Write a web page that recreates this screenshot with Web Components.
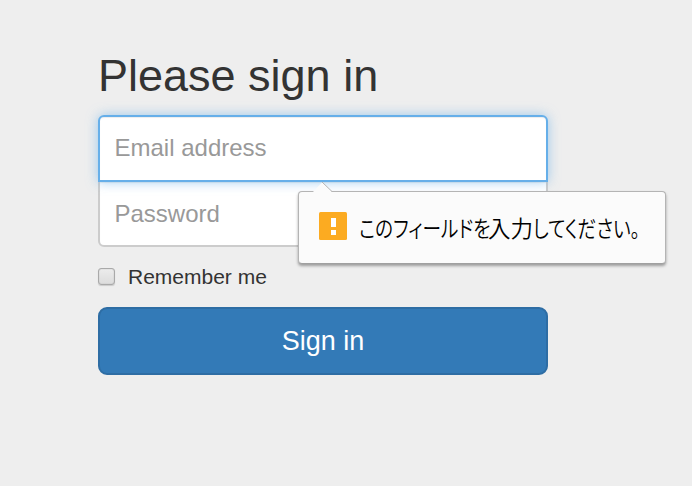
<!DOCTYPE html>
<html lang="ja">
<head>
<meta charset="utf-8">
<title>Sign in</title>
<style>
    body {
        margin: 0;
        background-color: #eee;
        color: #333;
        font-family: "Liberation Sans", Arial, sans-serif;
    }
</style>
</head>
<body>
<sign-in-form>
    <text-field slot="fields" type="email" placeholder="Email address" active>
        <validation-bubble><span>このフィールドを</span><b>入力</b><span>してください。</span></validation-bubble>
    </text-field>
    <text-field slot="fields" type="password" placeholder="Password"></text-field>
    <check-option slot="options">Remember me</check-option>
    <submit-button slot="actions">Sign in</submit-button>
</sign-in-form>

<script>
class SignInForm extends HTMLElement {
    connectedCallback() {
        this.attachShadow({ mode: 'open' });
        this.shadowRoot.innerHTML = `
            <style>
                :host {
                    display: block;
                    width: 450px;
                    padding: 51px 0 0 98px;
                }
                h2 {
                    margin: 0 0 14px;
                    font-size: 45px;
                    font-weight: 400;
                    line-height: 50px;
                }
                .fields {
                    display: flex;
                    flex-direction: column;
                }
                .options {
                    padding: 15px 0;
                }
            </style>
            <h2>Please sign in</h2>
            <div class="fields"><slot name="fields"></slot></div>
            <div class="options"><slot name="options"></slot></div>
            <slot name="actions"></slot>
        `;
    }
}
customElements.define('sign-in-form', SignInForm);

class TextField extends HTMLElement {
    connectedCallback() {
        this.attachShadow({ mode: 'open' });
        this.shadowRoot.innerHTML = `
            <style>
                :host {
                    display: block;
                    position: relative;
                }
                :host([active]) {
                    z-index: 1;
                    margin-bottom: -2px;
                }
                input {
                    display: block;
                    box-sizing: border-box;
                    width: 100%;
                    height: 67px;
                    margin: 0;
                    padding: 15px 14.5px;
                    border: 2px solid #ccc;
                    border-radius: 0 0 6px 6px;
                    background-color: #fff;
                    box-shadow: inset 0 1px 1px rgba(0, 0, 0, 0.075);
                    font-family: inherit;
                    font-size: 24px;
                    outline: 0;
                }
                :host([active]) input {
                    padding-bottom: 17px;
                    border-color: #66afe9;
                    border-radius: 6px 6px 0 0;
                    box-shadow: inset 0 1px 1px rgba(0, 0, 0, 0.075), 0 0 12px rgba(102, 175, 233, 0.6);
                }
                input::placeholder {
                    color: #999;
                    opacity: 1;
                }
            </style>
            <input>
            <slot></slot>
        `;
        const input = this.shadowRoot.querySelector('input');
        input.type = this.getAttribute('type');
        input.placeholder = this.getAttribute('placeholder');
    }
}
customElements.define('text-field', TextField);

class ValidationBubble extends HTMLElement {
    connectedCallback() {
        this.attachShadow({ mode: 'open' });
        this.shadowRoot.innerHTML = `
            <style>
                :host {
                    position: absolute;
                    top: 76px;
                    left: 200px;
                    display: flex;
                    align-items: center;
                    box-sizing: border-box;
                    width: 368px;
                    height: 73px;
                    padding: 0 0 4px 20px;
                    border: 1px solid #b4b4b4;
                    border-bottom-color: #a0a0a0;
                    border-radius: 4px;
                    background-color: #fbfbfb;
                    box-shadow: 0 2px 3px rgba(0, 0, 0, 0.35);
                    color: #000;
                    font-family: "Noto Sans CJK JP", sans-serif;
                    font-size: 23px;
                    font-weight: 350;
                    white-space: nowrap;
                }
                .arrow {
                    position: absolute;
                    top: -11px;
                    left: 12px;
                }
                .icon {
                    flex: none;
                    margin-right: 12px;
                }
                .message {
                    display: flex;
                    align-items: baseline;
                    padding-top: 2px;
                }
                /* kana run narrower than the kanji between them */
                ::slotted(span) {
                    width: 129px;
                    font-feature-settings: "palt";
                    transform: scaleX(0.81);
                    transform-origin: 0 50%;
                }
                ::slotted(b) {
                    width: 45px;
                    font-size: 22.5px;
                    font-weight: inherit;
                }
            </style>
            <svg class="arrow" width="22" height="12" viewBox="0 0 22 12">
                <path d="M1 12 L11.5 1 L21 11 V12 Z" fill="#fbfbfb"/>
                <path d="M11 1 L21 10.5" fill="none" stroke="#b4b4b4"/>
            </svg>
            <svg class="icon" width="28" height="28" viewBox="0 0 28 28">
                <rect width="28" height="28" rx="1.5" fill="#fcab21"/>
                <path d="M12 6h5v9h-5zM12 18h5v5h-5z" fill="#fff"/>
            </svg>
            <div class="message"><slot></slot></div>
        `;
    }
}
customElements.define('validation-bubble', ValidationBubble);

class CheckOption extends HTMLElement {
    connectedCallback() {
        this.attachShadow({ mode: 'open' });
        this.shadowRoot.innerHTML = `
            <style>
                :host {
                    display: block;
                    font-size: 21px;
                    line-height: 30px;
                }
                label {
                    display: flex;
                    align-items: center;
                    gap: 13px;
                }
                input {
                    appearance: none;
                    box-sizing: border-box;
                    width: 17px;
                    height: 17px;
                    margin: 0 0 2px;
                    border: 1px solid #a9a9a9;
                    border-radius: 3px;
                    background: linear-gradient(#ececec, #dcdcdc);
                    box-shadow: 0 1px 1px rgba(0, 0, 0, 0.15), inset 0 0 1px #999;
                }
            </style>
            <label><input type="checkbox"><slot></slot></label>
        `;
    }
}
customElements.define('check-option', CheckOption);

class SubmitButton extends HTMLElement {
    connectedCallback() {
        this.attachShadow({ mode: 'open' });
        this.shadowRoot.innerHTML = `
            <style>
                :host {
                    display: block;
                }
                button {
                    display: block;
                    box-sizing: border-box;
                    width: 100%;
                    height: 68px;
                    padding: 0;
                    border: 2px solid #2e6da4;
                    border-radius: 9px;
                    background-color: #337ab7;
                    color: #fff;
                    font-family: inherit;
                    font-size: 27px;
                }
            </style>
            <button type="button"><slot></slot></button>
        `;
    }
}
customElements.define('submit-button', SubmitButton);
</script>
</body>
</html>
